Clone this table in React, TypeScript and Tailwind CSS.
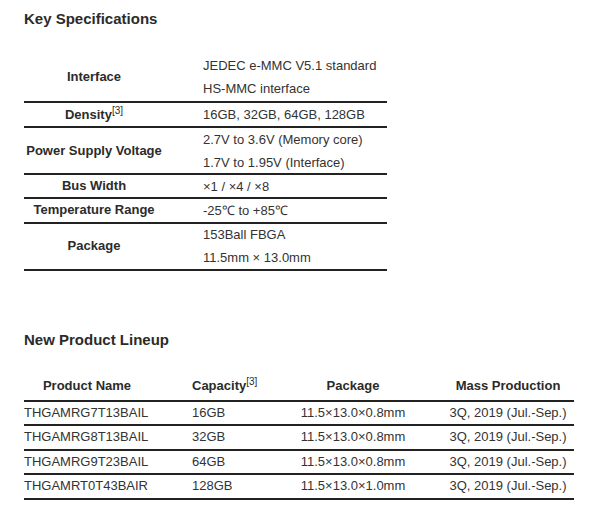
const specs: { label: React.ReactNode; values: string[]; h: string }[] = [
  { label: "Interface", values: ["JEDEC e-MMC V5.1 standard", "HS-MMC interface"], h: "h-[51px]" },
  {
    label: (
      <>
        Density<sup className="text-[10px] font-normal">[3]</sup>
      </>
    ),
    values: ["16GB, 32GB, 64GB, 128GB"],
    h: "h-[25px]",
  },
  {
    label: "Power Supply Voltage",
    values: ["2.7V to 3.6V (Memory core)", "1.7V to 1.95V (Interface)"],
    h: "h-[47px]",
  },
  { label: "Bus Width", values: ["×1 / ×4 / ×8"], h: "h-[24px]" },
  { label: "Temperature Range", values: ["-25℃ to +85℃"], h: "h-[24.5px]" },
  { label: "Package", values: ["153Ball FBGA", "11.5mm × 13.0mm"], h: "h-[47px]" },
];

const lineup = [
  ["THGAMRG7T13BAIL", "16GB", "11.5×13.0×0.8mm", "3Q, 2019 (Jul.-Sep.)"],
  ["THGAMRG8T13BAIL", "32GB", "11.5×13.0×0.8mm", "3Q, 2019 (Jul.-Sep.)"],
  ["THGAMRG9T23BAIL", "64GB", "11.5×13.0×0.8mm", "3Q, 2019 (Jul.-Sep.)"],
  ["THGAMRT0T43BAIR", "128GB", "11.5×13.0×1.0mm", "3Q, 2019 (Jul.-Sep.)"],
];

export default function App() {
  return (
    <div
      className="min-h-[517px] w-[600px] bg-white pl-[24px] text-[13px] text-[#333]"
      style={{ fontFamily: '"Liberation Sans", Arial, sans-serif' }}
    >
      <h2 className="pt-[10px] text-[15px] font-bold leading-[18px] text-[#2b2b2b]">
        Key Specifications
      </h2>

      {/* Key specs table */}
      <div className="mt-[24px] w-[363px]">
        {specs.map((s, i) => (
          <div key={i} className={`flex items-center border-b-2 border-[#222] ${s.h}`}>
            <div className="w-[140px] text-center font-bold leading-[22px] text-[#2b2b2b]">
              {s.label}
            </div>
            <div className="flex-1 pl-[39px]">
              {s.values.map((v) => (
                <p key={v} className="leading-[23px]">
                  {v}
                </p>
              ))}
            </div>
          </div>
        ))}
      </div>

      <h2 className="mt-[60px] text-[15px] font-bold leading-[18px] text-[#2b2b2b]">
        New Product Lineup
      </h2>

      {/* Lineup table */}
      <div className="mt-[26px] w-[550px]">
        <div className="flex h-[27px] items-center border-b-2 border-[#222] pb-[2px] font-bold leading-[22px] text-[#2b2b2b]">
          <div className="w-[126px] text-center">Product Name</div>
          <div className="w-[114px] pl-[42px]">
            Capacity<sup className="text-[10px] font-normal">[3]</sup>
          </div>
          <div className="w-[178px] text-center">Package</div>
          <div className="w-[132px] text-center">Mass Production</div>
        </div>
        {lineup.map((r) => (
          <div key={r[0]} className="flex h-[24.5px] items-center border-b-2 border-[#222] leading-[22px]">
            <div className="w-[126px]">{r[0]}</div>
            <div className="w-[114px] pl-[42px]">{r[1]}</div>
            <div className="w-[178px] text-center">{r[2]}</div>
            <div className="w-[132px] text-center">{r[3]}</div>
          </div>
        ))}
      </div>
    </div>
  );
}
